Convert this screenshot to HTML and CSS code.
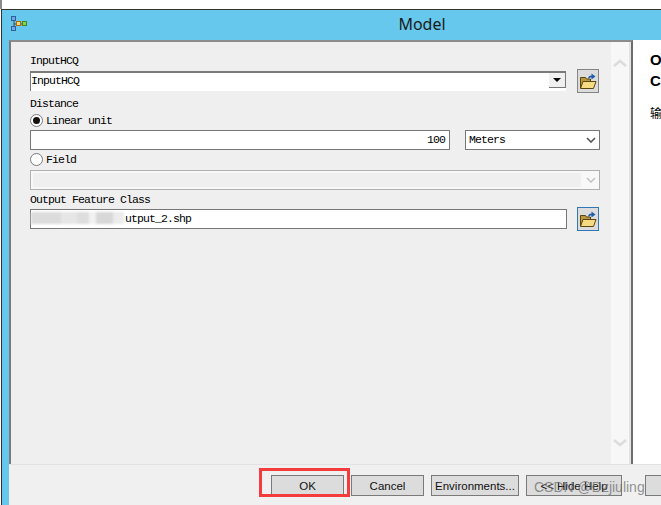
FILE: index.html
```html
<!DOCTYPE html>
<html lang="en">
<head>
  <meta charset="UTF-8">
  <title>Model</title>
  <link rel="stylesheet" href="styles.css">
</head>
<body>
  <div class="desktop-strip"></div>
  <div class="window">
    <div class="titlebar">
      <svg class="model-icon" width="16" height="16" viewBox="0 0 16 16">
        <path d="M3 5V10M3 8H6M10 8H12" stroke="#4a4a4a" fill="none"/>
        <rect x="0.5" y="0.5" width="4" height="4" fill="#6fa8e4" stroke="#2f5f9f"/>
        <rect x="0.5" y="10.5" width="4" height="4" fill="#6fa8e4" stroke="#2f5f9f"/>
        <rect x="5.5" y="5.5" width="4" height="4" fill="#fbd87a" stroke="#b06a10"/>
        <rect x="11.5" y="5.5" width="4" height="4" fill="#8fd04a" stroke="#3f8a1a"/>
      </svg>
      <span class="title">Model</span>
    </div>

    <div class="main">
      <div class="panel">
        <div class="form">
          <div class="label first">InputHCQ</div>
          <div class="row row-combo">
            <div class="combo">
              <span class="combo-text">InputHCQ</span>
              <span class="combo-arrow"></span>
            </div>
            <button class="browse">
              <svg width="18" height="18" viewBox="0 0 18 18">
                <path d="M1.500 16V5.500h5l1 1.500h4v2" fill="#b8973f" stroke="#5a4710"/>
                <path d="M1.500 16.500L4 9.500h13l-2.500 7z" fill="#f7db82" stroke="#5a4710"/>
                <path d="M9 7C9 4.500 10.500 3.500 12.500 3.500V1.500l4 3-4 3V5.500C11 5.500 10 6 9 7z" fill="#1f5fa8"/>
              </svg>
            </button>
          </div>

          <div class="label label-distance">Distance</div>
          <div class="radio-row">
            <span class="radio checked"></span>
            <span class="radio-label">Linear unit</span>
          </div>
          <div class="row row-unit">
            <div class="field field-number">100</div>
            <div class="select">
              <span>Meters</span>
              <svg class="chevron" width="10" height="6" viewBox="0 0 10 6"><path d="M1 1l4 4 4-4" fill="none" stroke="#555" stroke-width="1.600"/></svg>
            </div>
          </div>
          <div class="radio-row radio-field">
            <span class="radio"></span>
            <span class="radio-label">Field</span>
          </div>
          <div class="select select-off">
            <span class="select-fill"></span>
            <svg class="chevron" width="10" height="6" viewBox="0 0 10 6"><path d="M1 1l4 4 4-4" fill="none" stroke="#c4c4c4" stroke-width="1.600"/></svg>
          </div>

          <div class="label label-output">Output Feature Class</div>
          <div class="row row-output">
            <div class="field field-path">
              <span class="smudge"></span>
              <span class="path-text">utput_2.shp</span>
            </div>
            <button class="browse focused">
              <svg width="18" height="18" viewBox="0 0 18 18">
                <path d="M1.500 16V5.500h5l1 1.500h4v2" fill="#b8973f" stroke="#5a4710"/>
                <path d="M1.500 16.500L4 9.500h13l-2.500 7z" fill="#f7db82" stroke="#5a4710"/>
                <path d="M9 7C9 4.500 10.500 3.500 12.500 3.500V1.500l4 3-4 3V5.500C11 5.500 10 6 9 7z" fill="#1f5fa8"/>
              </svg>
            </button>
          </div>
        </div>

        <div class="scroll-strip">
          <svg width="14" height="8" viewBox="0 0 14 8"><path d="M1 7l6-5 6 5" fill="none" stroke="#dcdcdc" stroke-width="2.500"/></svg>
          <svg width="14" height="8" viewBox="0 0 14 8"><path d="M1 1l6 5 6-5" fill="none" stroke="#dcdcdc" stroke-width="2.500"/></svg>
        </div>
      </div>

      <div class="help">
        <div class="help-title">Output<br>Class</div>
        <div class="help-text">输出</div>
      </div>
    </div>

    <div class="footer">
      <button class="btn btn-ok">OK</button>
      <button class="btn btn-cancel">Cancel</button>
      <button class="btn btn-env">Environments...</button>
      <button class="btn btn-hide">&lt;&lt; Hide Help</button>
      <button class="btn btn-tool"></button>
      <span class="ok-mark"></span>
      <span class="watermark">CSDN @Dzjiuling</span>
    </div>
  </div>
</body>
</html>
```

FILE: styles.css
```css
:root {
  --azul: #65c8ec;
  --fundo: #efefef;
  --borda: #7a7a7a;
  --botao: #dcdcdc;
}

* {
  box-sizing: border-box;
}

html, body {
  height: 100%;
}

body {
  margin: 0;
  background-color: #ffffff;
  overflow: hidden;
  color: #000000;
  font-family: "Liberation Mono", monospace;
  font-size: 11.5px;
  letter-spacing: -0.9px;
}

.desktop-strip {
  height: 9px;
  border-left: 2px solid #8a8a8a;
}

.window {
  height: 496px;
  margin-left: 1px;
  padding-left: 7px;
  border-top: 1px solid #333333;
  border-left: 1px solid #333333;
  background-color: var(--azul);
  display: flex;
  flex-direction: column;
}

.titlebar {
  position: relative;
  height: 30px;
  flex: none;
  display: flex;
  align-items: center;
  justify-content: center;
  padding-left: 174px;
  padding-bottom: 2px;
}

.model-icon {
  position: absolute;
  left: 2px;
  top: 6px;
}

.title {
  font-family: "Noto Sans", sans-serif;
  font-size: 16px;
  letter-spacing: 0;
  color: #1a1a1a;
}

.main {
  height: 424px;
  flex: none;
  display: flex;
}

.panel {
  width: 624px;
  flex: none;
  display: flex;
  border-top: 2px solid #8c8c8c;
  border-left: 2px solid #7a7a7a;
  border-right: 2px solid #6d6d6d;
  background-color: var(--fundo);
}

.form {
  width: 600px;
  flex: none;
  padding-left: 19px;
}

.scroll-strip {
  width: 20px;
  flex: none;
  padding: 17px 0 17px;
  background-color: #f7f7f7;
  border-right: 2px solid #e4e4e4;
  display: flex;
  flex-direction: column;
  align-items: center;
  justify-content: space-between;
}

.help {
  flex: 1;
  overflow: hidden;
  background-color: #ffffff;
  padding: 9px 0 0 17px;
  letter-spacing: 0;
  white-space: nowrap;
}

.help-title {
  font-family: "Liberation Sans", sans-serif;
  font-weight: bold;
  font-size: 15px;
  line-height: 21px;
}

.help-text {
  font-family: "Noto Sans CJK SC", sans-serif;
  font-size: 12px;
  margin-top: 13px;
}

.label {
  height: 14px;
  line-height: 14px;
}

.label.first {
  margin-top: 12px;
}

.label-distance {
  margin-top: 4px;
}

.label-output {
  margin-top: 3px;
}

.row {
  display: flex;
  align-items: flex-start;
}

.row-combo {
  margin-top: 1px;
  height: 24px;
}

.combo {
  position: relative;
  width: 536px;
  height: 20px;
  margin-top: 2px;
  margin-right: 11px;
  border-top: 2px solid #7a7a7a;
  border-left: 1px solid #7a7a7a;
  background-color: #ffffff;
  line-height: 16px;
}

.combo-arrow {
  position: absolute;
  right: 0;
  top: 0;
  width: 17px;
  height: 15px;
  background-color: #f0f0f0;
  border-right: 1px solid #777777;
  border-bottom: 1px solid #777777;
}

.combo-arrow::after {
  content: "";
  position: absolute;
  left: 4px;
  top: 5px;
  border-left: 4px solid transparent;
  border-right: 4px solid transparent;
  border-top: 4px solid #000000;
}

.browse {
  width: 22px;
  height: 24px;
  padding: 0;
  background-color: var(--botao);
  border: 1px solid #858585;
  display: flex;
  align-items: center;
  justify-content: center;
}

.browse.focused {
  border-color: #2f78b5;
}

.radio-row {
  display: flex;
  align-items: center;
  height: 15px;
  margin-top: 2px;
}

.radio {
  position: relative;
  width: 13px;
  height: 13px;
  flex: none;
  margin-right: 3px;
  border: 1px solid #7a7a7a;
  border-radius: 50%;
  background-color: #ffffff;
}

.radio.checked::after {
  content: "";
  position: absolute;
  left: 2px;
  top: 2px;
  width: 7px;
  height: 7px;
  border-radius: 50%;
  background-color: #111111;
}

.row-unit {
  margin-top: 2px;
  height: 20px;
}

.field {
  height: 20px;
  border: 1px solid #777777;
  background-color: #ffffff;
  line-height: 18px;
}

.field-number {
  width: 420px;
  margin-right: 15px;
  padding-right: 4px;
  text-align: right;
}

.select {
  position: relative;
  width: 135px;
  height: 20px;
  border: 1px solid #777777;
  background-color: #ffffff;
  line-height: 18px;
  padding-left: 3px;
}

.chevron {
  position: absolute;
  right: 3px;
  top: 6px;
}

.radio-field {
  margin-top: 2px;
}

.select-off {
  width: 570px;
  margin-top: 3px;
  padding: 2px;
  border: 1px solid #b0b0b0;
  background-color: #f8f8f8;
}

.select-fill {
  display: block;
  width: 548px;
  height: 14px;
  background-color: var(--fundo);
}

.row-output {
  height: 24px;
}

.field-path {
  position: relative;
  width: 537px;
  margin-top: 2px;
  margin-right: 10px;
  padding-left: 94px;
}

.smudge {
  position: absolute;
  left: 0;
  top: 2px;
  width: 93px;
  height: 12px;
  background: linear-gradient(90deg, #dcdcdc 0 32%, #e6e6e6 32% 50%, #dedede 50% 62%, #f2f2f2 62% 70%, #d8d8d8 70% 88%, #ececec 88%);
  filter: blur(1px);
}

.footer {
  position: relative;
  flex: 1;
  min-height: 0;
  background-color: #f0f0f0;
  border-top: 1px solid #e2e2e2;
  display: flex;
  padding-top: 10px;
  padding-left: 262px;
  letter-spacing: 0;
}

.btn {
  height: 21px;
  margin-right: 7px;
  padding: 0;
  background-color: var(--botao);
  border: 1px solid var(--borda);
  font-family: "Liberation Sans", sans-serif;
  font-size: 11.5px;
  color: #111111;
  flex: none;
}

.btn-ok {
  width: 73px;
}

.btn-cancel {
  width: 73px;
}

.btn-env {
  width: 88px;
}

.btn-hide {
  width: 96px;
  margin-right: 23px;
}

.btn-tool {
  width: 30px;
}

.ok-mark {
  position: absolute;
  left: 250px;
  top: 3px;
  width: 91px;
  height: 29px;
  border: 3px solid #f43c3c;
}

.watermark {
  position: absolute;
  left: 525px;
  top: 14px;
  font-family: "Liberation Sans", sans-serif;
  font-size: 14px;
  color: rgba(110, 110, 110, 0.75);
  white-space: nowrap;
}
```
